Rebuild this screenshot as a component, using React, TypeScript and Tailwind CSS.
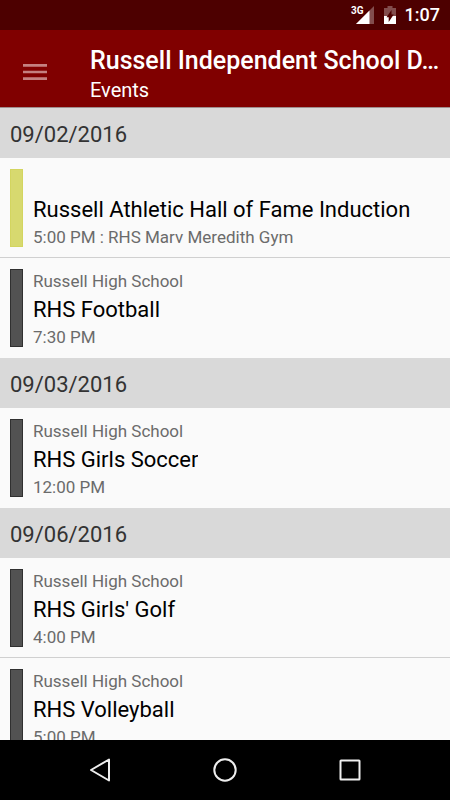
type EventItem = { school: string; title: string; detail: string; club?: boolean };
type Day = { date: string; events: EventItem[] };

const HIGH_SCHOOL = "Russell High School";

const days: Day[] = [
  {
    date: "09/02/2016",
    events: [
      {
        school: "",
        title: "Russell Athletic Hall of Fame Induction",
        detail: "5:00 PM : RHS Marv Meredith Gym",
        club: true,
      },
      { school: HIGH_SCHOOL, title: "RHS Football", detail: "7:30 PM" },
    ],
  },
  {
    date: "09/03/2016",
    events: [{ school: HIGH_SCHOOL, title: "RHS Girls Soccer", detail: "12:00 PM" }],
  },
  {
    date: "09/06/2016",
    events: [
      { school: HIGH_SCHOOL, title: "RHS Girls' Golf", detail: "4:00 PM" },
      { school: HIGH_SCHOOL, title: "RHS Volleyball", detail: "5:00 PM" },
    ],
  },
];

function StatusBar() {
  return (
    <div className="flex h-[30px] shrink-0 items-center justify-end bg-[#4d0000] pr-[10px] text-white">
      <svg className="mr-[9px] h-[20px] w-[24px]" viewBox="0 0 24 20" aria-hidden="true">
        <path d="M24 1V19H6z" fill="#fff" fillOpacity="0.3" />
        <path d="M19.500 5.500V19H6z" fill="#fff" />
        <text x="1" y="9" fill="#fff" stroke="#4d0000" strokeWidth="1" paintOrder="stroke" fontSize="10" fontWeight="700" fontFamily="Roboto, sans-serif">
          3G
        </text>
      </svg>
      <svg className="mr-[8px] h-[20px] w-[14px]" viewBox="0 0 14 20" aria-hidden="true">
        <path d="M4.500 1h5v2H13v8H1V3h3.500z" fill="#fff" fillOpacity="0.3" />
        <path d="M1 11h12v8H1z" fill="#fff" />
        <path d="M8.500 5v4.500h2.200L5.700 17v-4.700H3.500z" fill="#4d0000" />
      </svg>
      <span className="text-[18px] leading-[24px] font-medium">1:07</span>
    </div>
  );
}

function EventRow({ event }: { event: EventItem }) {
  const bar = event.club ? "border-[#d3d55f] bg-[#d7d96f]" : "border-[#303030] bg-[#525252]";
  return (
    <li className="flex h-[100px] gap-[10px] border-b border-[#d0d0d0] px-[10px] pt-[11px] pb-[10px] last:border-transparent">
      <span className={`w-[13px] shrink-0 border ${bar}`} />
      <div className="min-w-0 pt-px text-[17px] leading-[23px] text-[#6b6b6b]">
        <p className="h-[23px]">{event.school}</p>
        <p className="truncate text-[22px] leading-[33px] text-black">{event.title}</p>
        <p className="truncate">{event.detail}</p>
      </div>
    </li>
  );
}

export default function App() {
  return (
    <div className="flex h-screen flex-col overflow-hidden bg-[#fafafa] font-[Roboto,sans-serif]">
      <StatusBar />
      <header className="flex h-[78px] shrink-0 items-center border-b border-[#a08f8f] bg-[#800000] pr-[6px] text-white">
        <button type="button" aria-label="Open menu" className="flex h-[48px] w-[90px] shrink-0 items-center pt-[6px] pl-[23px]">
          <svg className="h-[16px] w-[24px]" viewBox="0 0 24 16" fill="#c58080" aria-hidden="true">
            <path d="M0 0h24v2.700H0zM0 6.650h24v2.700H0zM0 13.300h24v2.700H0z" />
          </svg>
        </button>
        <div className="min-w-0 pt-[11px]">
          <h1 className="truncate text-[25px] leading-[32px] font-medium">
            Russell Independent School D…
          </h1>
          <p className="text-[20px] leading-[26px]">Events</p>
        </div>
      </header>
      <main className="min-h-0 flex-1 overflow-y-auto [scrollbar-width:none]">
        {days.map((day) => (
          <section key={day.date}>
            <h2 className="h-[50px] bg-[#d9d9d9] px-[10px] text-[22px] leading-[53px] text-[#333333]">
              {day.date}
            </h2>
            <ul>
              {day.events.map((event) => (
                <EventRow key={event.title} event={event} />
              ))}
            </ul>
          </section>
        ))}
      </main>
      <nav className="grid h-[60px] shrink-0 grid-cols-3 bg-black px-[38px]">
        <button type="button" aria-label="Back" className="flex items-center justify-center">
          <svg className="h-[26px] w-[26px]" viewBox="0 0 26 26" fill="none" stroke="#eee" strokeWidth="2" strokeLinejoin="round" aria-hidden="true">
            <path d="M22 2.500V23.500L4 13z" />
          </svg>
        </button>
        <button type="button" aria-label="Home" className="flex items-center justify-center">
          <svg className="h-[26px] w-[26px]" viewBox="0 0 26 26" fill="none" stroke="#eee" strokeWidth="2" aria-hidden="true">
            <circle cx="13" cy="13" r="10.700" />
          </svg>
        </button>
        <button type="button" aria-label="Recent apps" className="flex items-center justify-center">
          <svg className="h-[26px] w-[26px]" viewBox="0 0 26 26" fill="none" stroke="#eee" strokeWidth="2" strokeLinejoin="round" aria-hidden="true">
            <rect x="3.500" y="3.500" width="19" height="19" rx="0.500" />
          </svg>
        </button>
      </nav>
    </div>
  );
}
